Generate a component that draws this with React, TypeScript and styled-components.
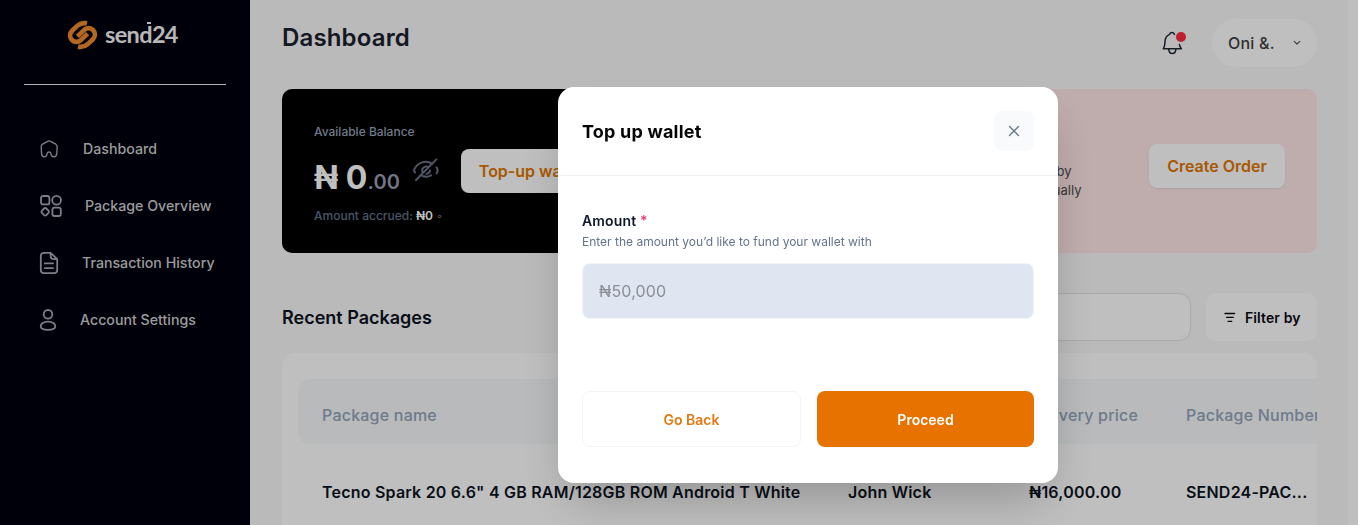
import React from "react";
import styled, { createGlobalStyle } from "styled-components";

const GlobalStyle = createGlobalStyle`
  * { box-sizing: border-box; }
  html, body { margin: 0; padding: 0; height: 100%; overflow: hidden; }
  body { font-family: Inter, "Liberation Sans", sans-serif; background: #ffffff; color: #0f172a; }
  button, input { font-family: inherit; margin: 0; }
`;

const Shell = styled.div`
  display: flex;
  height: 525px;
  overflow: hidden;
`;

const Sidebar = styled.aside`
  flex: 0 0 250px;
  height: 525px;
  background: #00000e;
  padding: 0 24px;
`;

const Brand = styled.div`
  display: flex;
  align-items: center;
  height: 84px;
  padding: 0 0 14px 43px;
  gap: 7px;
`;

const BrandName = styled.span`
  margin-top: -2px;
  font-family: Lato, sans-serif;
  font-weight: 700;
  font-size: 23.5px;
  line-height: 28px;
  letter-spacing: -0.65px;
  color: #f4f4f6;
`;

const DottedLetter = styled.span`
  position: relative;
  &::after {
    content: "";
    position: absolute;
    top: 2px;
    right: 1px;
    width: 4px;
    height: 2px;
    background: currentColor;
  }
`;

const Divider = styled.div`
  height: 1px;
  background: #eef2f2;
`;

const Nav = styled.nav`
  display: flex;
  flex-direction: column;
  padding: 35px 0 0 15px;
`;

const NavItem = styled.a<{ $gap: number }>`
  display: flex;
  align-items: center;
  gap: ${(p) => p.$gap}px;
  height: 57px;
  font-size: 14.2px;
  font-weight: 500;
  color: #cfcfcf;
  white-space: nowrap;
  svg { color: #a3a9b6; flex: none; }
`;

const Main = styled.main`
  flex: 0 0 1098px;
  min-width: 0;
  height: 525px;
  background: #f8f8f8;
  padding: 0 31px 0 32px;
  overflow: hidden;
`;

const TopBar = styled.header`
  display: flex;
  height: 89px;
  justify-content: space-between;
`;

const PageTitle = styled.h1`
  margin: 22px 0 0;
  font-size: 24px;
  line-height: 31px;
  font-weight: 600;
  letter-spacing: 0.15px;
  color: #1a202e;
`;

const TopActions = styled.div`
  display: flex;
  align-items: center;
  gap: 26px;
  height: 48px;
  margin-top: 19px;
`;

const UserPill = styled.button`
  display: flex;
  align-items: center;
  justify-content: space-between;
  width: 105px;
  height: 48px;
  padding: 0 16px 0 16px;
  border: 0;
  border-radius: 24px;
  background: #ffffff;
  font-size: 16px;
  font-weight: 500;
  letter-spacing: 0.2px;
  color: #3f3f3f;
`;

const Cards = styled.section`
  display: grid;
  grid-template-columns: 1fr 1fr;
  gap: 16px;
  height: 164px;
`;

const BalanceCard = styled.div`
  display: flex;
  border-radius: 10px;
  background: #000000;
  padding: 33px 24px 0 32px;
`;

const BalanceInfo = styled.div`
  flex: 0 0 147px;
`;

const BalanceLabel = styled.div`
  font-size: 12px;
  line-height: 20px;
  font-weight: 500;
  color: #94a3b8;
`;

const BalanceRow = styled.div`
  display: flex;
  align-items: baseline;
  height: 46px;
  margin-top: 15px;
  line-height: 42px;
  white-space: nowrap;
`;

const Whole = styled.span`
  font-size: 32px;
  font-weight: 700;
  color: #ffffff;
`;

const Fraction = styled.span`
  font-size: 20px;
  font-weight: 600;
  letter-spacing: 0.2px;
  color: #9a9eb2;
`;

const HideIcon = styled.svg`
  align-self: flex-start;
  margin: 0 0 0 12px;
`;

const Accrued = styled.div`
  margin-top: 3px;
  font-size: 12px;
  line-height: 20px;
  font-weight: 500;
  color: #64748b;
  white-space: nowrap;
  b { color: #ffffff; font-weight: 600; }
  i { font-style: normal; color: #8c6670; }
`;

const CardButton = styled.button<{ $width: number; $top: number }>`
  flex: 0 0 ${(p) => p.$width}px;
  height: 44px;
  margin-top: ${(p) => p.$top}px;
  padding: 0;
  border: 0;
  border-radius: 8px;
  background: #ffffff;
  box-shadow: 0 1px 2px rgba(16, 24, 40, 0.08);
  font-size: 16px;
  font-weight: 600;
  color: #e07600;
`;

const OrderCard = styled.div`
  display: flex;
  justify-content: space-between;
  border-radius: 10px;
  background: #ffe6e6;
  padding: 22px 32px 0 32px;
`;

const OrderText = styled.p`
  width: 242px;
  margin: 51px 0 0;
  text-align: right;
  font-size: 13px;
  line-height: 19px;
  color: #4a4a4a;
  white-space: nowrap;
`;

const OrderLine = styled.span<{ $inset?: number }>`
  display: block;
  padding-right: ${(p) => p.$inset ?? 0}px;
`;

const ListHeader = styled.div`
  display: flex;
  align-items: center;
  height: 48px;
  margin-top: 40px;
`;

const SectionTitle = styled.h2`
  margin: 2px 0 0;
  flex: 1;
  font-size: 18px;
  line-height: 24px;
  font-weight: 600;
  color: #0c1322;
`;

const SearchBox = styled.div`
  width: 320px;
  height: 48px;
  border: 1px solid #e2e2e2;
  border-radius: 12px;
  background: #ffffff;
`;

const FilterButton = styled.button`
  display: flex;
  align-items: center;
  justify-content: flex-start;
  gap: 9px;
  width: 111px;
  height: 48px;
  margin-left: 15px;
  padding: 1px 0 0 18px;
  border: 0;
  border-radius: 10px;
  background: #ffffff;
  font-size: 14px;
  font-weight: 600;
  letter-spacing: 0.1px;
  color: #0a0a12;
  white-space: nowrap;
`;

const TableCard = styled.div`
  height: 200px;
  margin-top: 12px;
  padding: 26px 0 0 16px;
  border-radius: 14px 14px 0 0;
  background: #ffffff;
  overflow: hidden;
`;

const Row = styled.div<{ $head?: boolean }>`
  display: grid;
  grid-template-columns: 526px 181px 157px 200px;
  align-items: center;
  width: 1100px;
  height: ${(p) => (p.$head ? 65 : 95)}px;
  padding: ${(p) => (p.$head ? "7px" : "0")} 0 0 24px;
  border-radius: 12px;
  background: ${(p) => (p.$head ? "#f6f9fb" : "transparent")};
  color: ${(p) => (p.$head ? "#94a3b8" : "#0d1422")};
  font-size: 16px;
  font-weight: ${(p) => (p.$head ? 500 : 600)};
  letter-spacing: 0.21px;
  white-space: nowrap;
`;

const Overlay = styled.div`
  position: fixed;
  inset: 0;
  display: flex;
  align-items: flex-start;
  padding: 87px 0 0 558px;
  background: rgba(0, 0, 0, 0.25);
`;

const Dialog = styled.div`
  width: 500px;
  height: 396px;
  border-radius: 16px;
  background: #ffffff;
  box-shadow: 0 25px 50px -12px rgba(0, 0, 0, 0.25);
`;

const DialogHeader = styled.div`
  display: flex;
  align-items: center;
  justify-content: space-between;
  height: 89px;
  padding: 0 24px;
  border-bottom: 1px solid #f1f1f3;
`;

const DialogTitle = styled.h3`
  margin: 2px 0 0;
  font-size: 18px;
  line-height: 24px;
  font-weight: 700;
  letter-spacing: 0.2px;
  color: #050505;
`;

const CloseButton = styled.button`
  display: flex;
  align-items: center;
  justify-content: center;
  width: 40px;
  height: 40px;
  padding: 0;
  border: 0;
  border-radius: 8px;
  background: #f8fafc;
`;

const Form = styled.div`
  display: flex;
  flex-direction: column;
  padding: 35px 24px 0;
`;

const Label = styled.label`
  font-size: 14px;
  line-height: 20px;
  font-weight: 600;
  letter-spacing: 0.14px;
  color: #0f172a;
  span { color: #e0457b; }
`;

const Hint = styled.div`
  margin-top: 1px;
  font-size: 12px;
  line-height: 20px;
  color: #64748b;
`;

const AmountInput = styled.input`
  width: 452px;
  height: 56px;
  margin-top: 11px;
  padding: 0 16px;
  border: 1px solid #f0f3f8;
  border-radius: 8px;
  background: #dfe6f2;
  font-size: 16px;
  letter-spacing: 0.15px;
  outline: 0;
  &::placeholder { color: #8b8e93; opacity: 1; }
`;

const DialogActions = styled.div`
  display: flex;
  gap: 16px;
  margin-top: 72px;
`;

const ActionButton = styled.button<{ $primary?: boolean }>`
  flex: 1;
  height: 56px;
  padding: 0;
  border: ${(p) => (p.$primary ? "0" : "1px solid #f3f4f6")};
  border-radius: 8px;
  background: ${(p) => (p.$primary ? "#e87200" : "#ffffff")};
  color: ${(p) => (p.$primary ? "#ffffff" : "#e07a10")};
  font-size: 14px;
  font-weight: 600;
`;

const LogoMark = () => (
  <svg width="31" height="30" viewBox="0 0 31 30" fill="none" stroke="#ef8a2d" strokeWidth="4.7" strokeLinecap="butt" strokeLinejoin="round">
    <path d="M20 3.3C16.2 2.6 13.4 3.1 10.8 5.4L5.3 10.5C2.5 13.3 2.4 17.4 5 20C7.6 22.6 11.2 22.4 14 19.9L20.6 13.6" />
    <path d="M11 26.7C14.8 27.4 17.6 26.9 20.2 24.6L25.7 19.5C28.5 16.7 28.6 12.6 26 10C23.4 7.4 19.8 7.6 17 10.1L10.4 16.4" />
  </svg>
);

const HomeIcon = () => (
  <svg width="20" height="20" viewBox="0 0 20 20" fill="none" stroke="currentColor" strokeWidth="1.4" strokeLinejoin="round">
    <path d="M8.8 2.3 3.6 5.2C2.5 5.9 2.2 6.7 2.2 7.8L2.6 14.8C2.7 17 3.6 17.8 5.4 17.8C7 17.8 7.5 17.2 7.8 15.8L8.2 14.2C8.6 12.5 11.4 12.5 11.8 14.2L12.2 15.8C12.5 17.2 13.2 17.8 14.8 17.8C16.8 17.8 17.6 17 17.8 14.8L18.2 7.8C18.2 6.7 17.8 5.9 16.8 5.2L11.6 2.3C10.6 1.7 9.8 1.7 8.8 2.3Z" />
  </svg>
);

const GridIcon = () => (
  <svg width="24" height="24" viewBox="0 0 24 24" fill="none" stroke="currentColor" strokeWidth="1.8" strokeLinejoin="round">
    <rect x="2" y="2" width="8.4" height="8.4" rx="2" />
    <circle cx="17.6" cy="6.2" r="4.4" />
    <rect x="13.4" y="13.6" width="8.4" height="8.4" rx="2" />
    <path d="M5.1 14.5a1.6 1.6 0 0 1 2.2 0l2.2 2.2a1.6 1.6 0 0 1 0 2.2l-2.2 2.2a1.6 1.6 0 0 1-2.2 0l-2.2-2.2a1.6 1.6 0 0 1 0-2.2Z" />
  </svg>
);

const DocIcon = () => (
  <svg width="20" height="24" viewBox="0 0 20 24" fill="none" stroke="currentColor" strokeWidth="1.8" strokeLinecap="round" strokeLinejoin="round">
    <path d="M11.6 1.8H5A3.2 3.2 0 0 0 1.8 5V19A3.2 3.2 0 0 0 5 22.2H15A3.2 3.2 0 0 0 18.2 19V8.2L11.6 1.8V5A3.2 3.2 0 0 0 14.8 8.2H18.2" />
    <path d="M5.8 12.4H14M5.8 17.2H14" />
  </svg>
);

const UserIcon = () => (
  <svg width="18" height="24" viewBox="0 0 18 24" fill="none" stroke="currentColor" strokeWidth="1.8">
    <circle cx="9" cy="6.3" r="4.3" />
    <path d="M9 13.6C4.5 13.6 1.7 16 1.7 18.3C1.7 20.8 4.8 21.8 9 21.8S16.3 20.8 16.3 18.3C16.3 16 13.5 13.6 9 13.6Z" />
  </svg>
);

const BellIcon = () => (
  <svg width="26" height="28" viewBox="0 0 26 28" fill="none" stroke="#1e2836" strokeWidth="1.5" strokeLinecap="round" strokeLinejoin="round">
    <path d="M14.5 5.4C13.6 2.9 10.2 3 9.6 5.4C6.2 6.7 5.2 9.4 5 12.5C4.9 15.6 4.7 18 3.2 19.7H21.4C20.1 18.4 19.6 17 19.4 15.4" />
    <path d="M8.8 19.9C8.8 26 15.8 26 15.8 19.9" />
    <circle cx="21" cy="8" r="5" fill="#ff2a3f" stroke="none" />
  </svg>
);

const ChevronIcon = () => (
  <svg width="8" height="6" viewBox="0 0 8 6" fill="none" stroke="#5a5a5a" strokeWidth="1.2" strokeLinecap="round" strokeLinejoin="round">
    <path d="M1.2 1.4 4 4 6.8 1.4" />
  </svg>
);

const FilterIcon = () => (
  <svg width="12" height="12" viewBox="0 0 12 12" fill="none" stroke="#0a0a12" strokeWidth="1.3" strokeLinecap="round">
    <path d="M1 1.5H10.6M2.6 5.4H9.2M4 9.3H7.8" />
  </svg>
);

const CloseIcon = () => (
  <svg width="12" height="12" viewBox="0 0 12 12" fill="none" stroke="#64748b" strokeWidth="1.3" strokeLinecap="round">
    <path d="M1.5 1.5 10.5 10.5M10.5 1.5 1.5 10.5" />
  </svg>
);

const navItems = [
  { label: "Dashboard", gap: 24, icon: <HomeIcon /> },
  { label: "Package Overview", gap: 22, icon: <GridIcon /> },
  { label: "Transaction History", gap: 23, icon: <DocIcon /> },
  { label: "Account Settings", gap: 23, icon: <UserIcon /> },
];

export default function App() {
  return (
    <>
      <GlobalStyle />
      <Shell>
        <Sidebar>
          <Brand>
            <LogoMark />
            <BrandName>
              sen<DottedLetter>d</DottedLetter>24
            </BrandName>
          </Brand>
          <Divider />
          <Nav>
            {navItems.map((item) => (
              <NavItem key={item.label} $gap={item.gap}>
                {item.icon}
                {item.label}
              </NavItem>
            ))}
          </Nav>
        </Sidebar>
        <Main>
          <TopBar>
            <PageTitle>Dashboard</PageTitle>
            <TopActions>
              <BellIcon />
              <UserPill>
                Oni &amp;.
                <ChevronIcon />
              </UserPill>
            </TopActions>
          </TopBar>
          <Cards>
            <BalanceCard>
              <BalanceInfo>
                <BalanceLabel>Available Balance</BalanceLabel>
                <BalanceRow>
                  <Whole>₦ 0</Whole>
                  <Fraction>.00</Fraction>
                  <HideIcon width="28" height="26" viewBox="0 0 28 26" fill="none" stroke="#6a728a" strokeWidth="2" strokeLinecap="round">
                    <path d="M3 15.5C2 14.2 2 12.4 3 11C7 4.8 14.2 3 20 6.6M24.4 10.4C26.2 12.6 26.2 14 24.6 16.2M10.2 18.8C13 20 16.6 19.8 19 18.4" />
                    <path d="M10.6 15.4C9 12 12 8.6 15.6 9.6M18 13.4C17.8 15.4 16.4 16.6 14.6 16.8M24.4 2.4 4 23" />
                  </HideIcon>
                </BalanceRow>
                <Accrued>
                  Amount accrued: <b>₦0</b> <i>◦</i>
                </Accrued>
              </BalanceInfo>
              <CardButton $width={142} $top={27}>Top-up wallet</CardButton>
            </BalanceCard>
            <OrderCard>
              <OrderText>
                <OrderLine $inset={10}>Create an order by</OrderLine>
                <OrderLine>adding packages manually</OrderLine>
              </OrderText>
              <CardButton $width={136} $top={33}>Create Order</CardButton>
            </OrderCard>
          </Cards>
          <ListHeader>
            <SectionTitle>Recent Packages</SectionTitle>
            <SearchBox />
            <FilterButton>
              <FilterIcon />
              Filter by
            </FilterButton>
          </ListHeader>
          <TableCard>
            <Row $head>
              <span>Package name</span>
              <span />
              <span>Delivery price</span>
              <span>Package Number</span>
            </Row>
            <Row>
              <span>Tecno Spark 20 6.6" 4 GB RAM/128GB ROM Android T White</span>
              <span>John Wick</span>
              <span>₦16,000.00</span>
              <span>SEND24-PAC...</span>
            </Row>
          </TableCard>
        </Main>
      </Shell>
      <Overlay>
        <Dialog role="dialog">
          <DialogHeader>
            <DialogTitle>Top up wallet</DialogTitle>
            <CloseButton aria-label="Close">
              <CloseIcon />
            </CloseButton>
          </DialogHeader>
          <Form>
            <Label>
              Amount <span>*</span>
            </Label>
            <Hint>Enter the amount you’d like to fund your wallet with</Hint>
            <AmountInput placeholder="₦50,000" />
            <DialogActions>
              <ActionButton>Go Back</ActionButton>
              <ActionButton $primary>Proceed</ActionButton>
            </DialogActions>
          </Form>
        </Dialog>
      </Overlay>
    </>
  );
}
